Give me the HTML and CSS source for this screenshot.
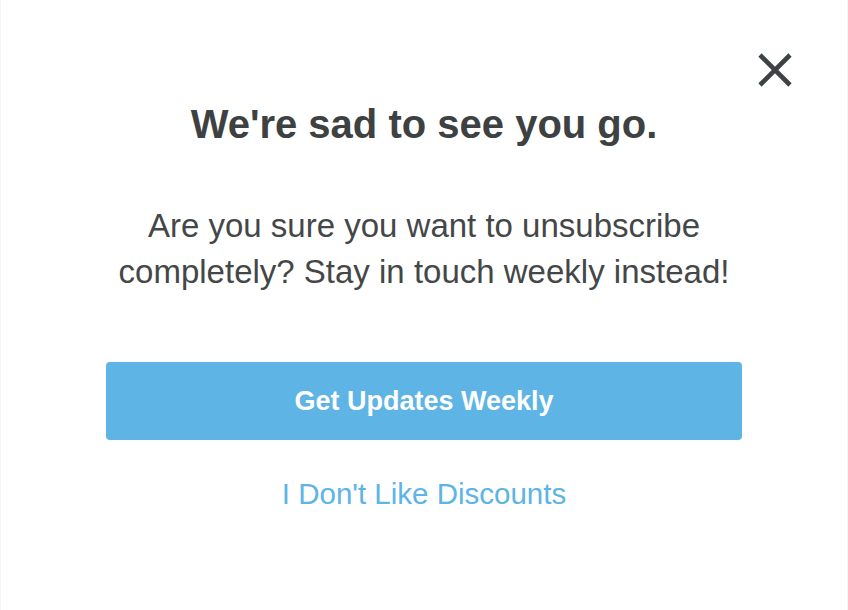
FILE: index.html
```html
<!DOCTYPE html>
<html>
<head>
<meta charset="utf-8">
<link rel="stylesheet" href="styles.css">
</head>
<body>
<div class="modal">
  <button class="close" aria-label="Close">
    <svg width="36" height="36" viewBox="0 0 36 36"><path d="M3 3 L33 33 M33 3 L3 33" stroke="#3d4244" stroke-width="4.6" stroke-linecap="butt" fill="none"/></svg>
  </button>
  <h1 class="title">We're sad to see you go.</h1>
  <p class="message">Are you sure you want to unsubscribe<br>completely? Stay in touch weekly instead!</p>
  <button class="primary">Get Updates Weekly</button>
  <a class="secondary" href="#">I Don't Like Discounts</a>
</div>
</body>
</html>
```
FILE: styles.css
```css
html, body {
  margin: 0;
  padding: 0;
  background: #ffffff;
}
body {
  font-family: "Liberation Sans", Arial, sans-serif;
}
.modal {
  position: relative;
  box-sizing: border-box;
  width: 848px;
  height: 610px;
  border-left: 1px solid #f5f5f5;
  border-right: 1px solid #f5f5f5;
  display: flex;
  flex-direction: column;
  align-items: center;
  padding-top: 100px;
}
.close {
  position: absolute;
  left: 756px;
  top: 52px;
  width: 36px;
  height: 36px;
  padding: 0;
  border: 0;
  background: none;
  cursor: pointer;
}
.close svg { display: block; }
.title {
  margin: 0;
  font-size: 40px;
  line-height: 48px;
  font-weight: bold;
  color: #3d4142;
}
.message {
  margin: 55px 0 0;
  font-size: 33px;
  line-height: 46px;
  color: #444748;
  text-align: center;
}
.primary {
  margin-top: 67px;
  width: 636px;
  height: 78px;
  border: 0;
  border-radius: 4px;
  background: #5db4e5;
  color: #ffffff;
  font-family: "Liberation Sans", Arial, sans-serif;
  font-size: 27px;
  font-weight: bold;
  cursor: pointer;
}
.secondary {
  margin-top: 36px;
  font-size: 29.5px;
  line-height: 36px;
  color: #5db4e5;
  text-decoration: none;
}
```
